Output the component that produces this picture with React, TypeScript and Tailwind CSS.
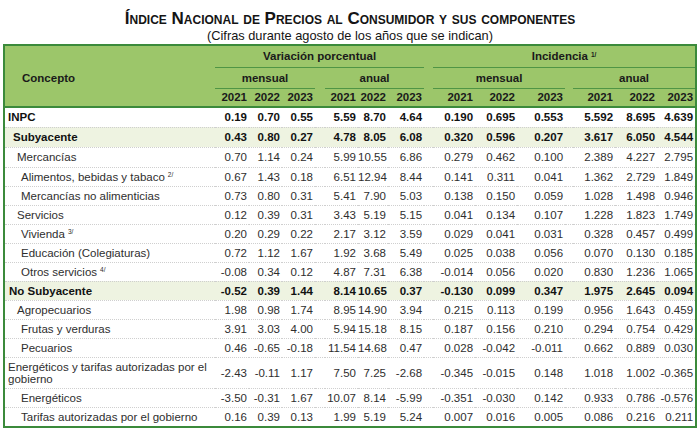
import React from "react";

type Row = {
  label: string;
  sup?: string;
  indent: string;
  bold?: boolean;
  shade?: boolean;
  double?: boolean;
  h: string;
  v: string[];
};

const rows: Row[] = [
  { label: "INPC", indent: "pl-[3px]", bold: true, h: "h-[20px]", v: ["0.19", "0.70", "0.55", "5.59", "8.70", "4.64", "0.190", "0.695", "0.553", "5.592", "8.695", "4.639"] },
  { label: "Subyacente", indent: "pl-[8px]", bold: true, shade: true, h: "h-[20px]", v: ["0.43", "0.80", "0.27", "4.78", "8.05", "6.08", "0.320", "0.596", "0.207", "3.617", "6.050", "4.544"] },
  { label: "Mercancías", indent: "pl-[12px]", h: "h-[20px]", v: ["0.70", "1.14", "0.24", "5.99", "10.55", "6.86", "0.279", "0.462", "0.100", "2.389", "4.227", "2.795"] },
  { label: "Alimentos, bebidas y tabaco", sup: "2/", indent: "pl-[16px]", h: "h-[19px]", v: ["0.67", "1.43", "0.18", "6.51", "12.94", "8.44", "0.141", "0.311", "0.041", "1.362", "2.729", "1.849"] },
  { label: "Mercancías no alimenticias", indent: "pl-[16px]", h: "h-[19px]", v: ["0.73", "0.80", "0.31", "5.41", "7.90", "5.03", "0.138", "0.150", "0.059", "1.028", "1.498", "0.946"] },
  { label: "Servicios", indent: "pl-[12px]", h: "h-[19px]", v: ["0.12", "0.39", "0.31", "3.43", "5.19", "5.15", "0.041", "0.134", "0.107", "1.228", "1.823", "1.749"] },
  { label: "Vivienda", sup: "3/", indent: "pl-[16px]", h: "h-[19px]", v: ["0.20", "0.29", "0.22", "2.17", "3.12", "3.59", "0.029", "0.041", "0.031", "0.328", "0.457", "0.499"] },
  { label: "Educación (Colegiaturas)", indent: "pl-[16px]", h: "h-[19px]", v: ["0.72", "1.12", "1.67", "1.92", "3.68", "5.49", "0.025", "0.038", "0.056", "0.070", "0.130", "0.185"] },
  { label: "Otros servicios", sup: "4/", indent: "pl-[16px]", h: "h-[19px]", v: ["-0.08", "0.34", "0.12", "4.87", "7.31", "6.38", "-0.014", "0.056", "0.020", "0.830", "1.236", "1.065"] },
  { label: "No Subyacente", indent: "pl-[4px]", bold: true, shade: true, h: "h-[19px]", v: ["-0.52", "0.39", "1.44", "8.14", "10.65", "0.37", "-0.130", "0.099", "0.347", "1.975", "2.645", "0.094"] },
  { label: "Agropecuarios", indent: "pl-[12px]", h: "h-[19px]", v: ["1.98", "0.98", "1.74", "8.95", "14.90", "3.94", "0.215", "0.113", "0.199", "0.956", "1.643", "0.459"] },
  { label: "Frutas y verduras", indent: "pl-[16px]", h: "h-[19px]", v: ["3.91", "3.03", "4.00", "5.94", "15.18", "8.15", "0.187", "0.156", "0.210", "0.294", "0.754", "0.429"] },
  { label: "Pecuarios", indent: "pl-[16px]", h: "h-[19px]", v: ["0.46", "-0.65", "-0.18", "11.54", "14.68", "0.47", "0.028", "-0.042", "-0.011", "0.662", "0.889", "0.030"] },
  { label: "Energéticos y tarifas autorizadas por el", indent: "pl-[3px]", double: true, h: "h-[31px]", v: ["-2.43", "-0.11", "1.17", "7.50", "7.25", "-2.68", "-0.345", "-0.015", "0.148", "1.018", "1.002", "-0.365"] },
  { label: "Energéticos", indent: "pl-[16px]", h: "h-[19px]", v: ["-3.50", "-0.31", "1.67", "10.07", "8.14", "-5.99", "-0.351", "-0.030", "0.142", "0.933", "0.786", "-0.576"] },
  { label: "Tarifas autorizadas por el gobierno", indent: "pl-[16px]", h: "h-[19px]", v: ["0.16", "0.39", "0.13", "1.99", "5.19", "5.24", "0.007", "0.016", "0.005", "0.086", "0.216", "0.211"] },
];

const years = ["2021", "2022", "2023"];

function Sup({ t }: { t: string }) {
  return <span className="relative top-[-3.5px] ml-[3px] text-[6.5px] leading-none">{t}</span>;
}

export default function App() {
  const numCell = "pr-[2px] text-right whitespace-nowrap";
  const line = "border-b border-[#4f9545]";
  return (
    <div
      className="w-[700px] h-[438px] bg-white text-[#1c1c1c] pt-[10px]"
      style={{ fontFamily: '"Liberation Sans", Arial, sans-serif' }}
    >
      <div className="text-center font-bold text-[17px] leading-[18px] [font-variant:small-caps] text-[#141414]">
        Índice Nacional de Precios al Consumidor y sus componentes
      </div>
      <div className="text-center text-[12.8px] leading-[16px] text-[#141414]">
        (Cifras durante agosto de los años que se indican)
      </div>
      <div className="mx-[3px] border-2 border-[#3b8a3b]">
        <table className="table-fixed border-collapse w-[690px] text-[11.5px] leading-[12px]">
          <colgroup>
            <col className="w-[210px]" />
            <col className="w-[34px]" />
            <col className="w-[33px]" />
            <col className="w-[33px]" />
            <col className="w-[10px]" />
            <col className="w-[33px]" />
            <col className="w-[30px]" />
            <col className="w-[36px]" />
            <col className="w-[9px]" />
            <col className="w-[42px]" />
            <col className="w-[42px]" />
            <col className="w-[48px]" />
            <col className="w-[8px]" />
            <col className="w-[42px]" />
            <col className="w-[42px]" />
            <col className="w-[38px]" />
          </colgroup>
          <thead className="bg-[#9cc66a] font-bold text-[#1a1a1a]">
            <tr className="h-[21px]">
              <th rowSpan={3} className="text-left pl-[17px] pt-[4px] font-bold border-b-2 border-[#3b8a3b]">
                Concepto
              </th>
              <th colSpan={7} className={`text-center font-bold ${line}`}>
                Variación porcentual
              </th>
              <th rowSpan={3} className="border-b-2 border-[#3b8a3b]" />
              <th colSpan={7} className={`text-center font-bold ${line}`}>
                Incidencia
                <Sup t="1/" />
              </th>
            </tr>
            <tr className="h-[21px]">
              <th colSpan={3} className={`text-center font-bold ${line}`}>mensual</th>
              <th rowSpan={2} className="border-b-2 border-[#3b8a3b]" />
              <th colSpan={3} className={`text-center font-bold ${line}`}>anual</th>
              <th colSpan={3} className={`text-center font-bold ${line}`}>mensual</th>
              <th rowSpan={2} className="border-b-2 border-[#3b8a3b]" />
              <th colSpan={3} className={`text-center font-bold ${line}`}>anual</th>
            </tr>
            <tr className="h-[19px]">
              {[0, 1, 2, 3].map((g) => (
                <React.Fragment key={g}>
                  {years.map((y) => (
                    <th key={y} className={`${numCell} font-bold border-b-2 border-[#3b8a3b]`}>
                      {y}
                    </th>
                  ))}
                </React.Fragment>
              ))}
            </tr>
          </thead>
          <tbody>
            {rows.map((r, i) => {
              const weight = r.bold ? "font-bold text-[#111]" : "text-[#2e2e2e]";
              const bg = r.shade ? "bg-[#eef3e1]" : "bg-white";
              const bt = i === 0 ? "" : "border-t border-dotted border-[#cfcfcf]";
              const cells: React.ReactNode[] = [];
              r.v.forEach((val, k) => {
                cells.push(
                  <td key={`v${k}`} className={`${numCell} ${bt}`}>
                    {val}
                  </td>
                );
                if (k === 2 || k === 5 || k === 8) {
                  cells.push(<td key={`s${k}`} className={bt} />);
                }
              });
              return (
                <tr key={r.label} className={`${r.h} ${bg} ${weight}`}>
                  <td className={`${r.indent} text-left align-middle ${bt}`}>
                    {r.label}
                    {r.double && (
                      <>
                        <br />
                        gobierno
                      </>
                    )}
                    {r.sup && <Sup t={r.sup} />}
                  </td>
                  {cells}
                </tr>
              );
            })}
          </tbody>
        </table>
      </div>
    </div>
  );
}
